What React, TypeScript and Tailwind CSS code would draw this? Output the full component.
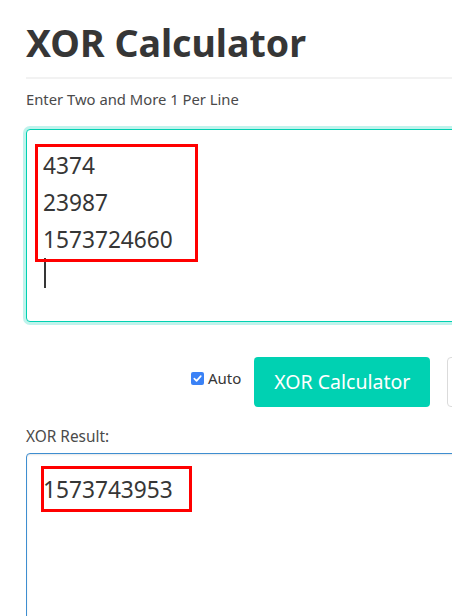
import React from "react";

export default function App() {
  const font = { fontFamily: '"Noto Sans", "Open Sans", sans-serif' };
  return (
    <div className="w-[452px] h-[616px] overflow-hidden bg-white text-[#363636]" style={font}>
      <div className="w-[560px] pl-[26px] pt-[18px]">
        <h1 className="text-[37.5px] font-bold leading-[50px] text-[#363636]">XOR Calculator</h1>
        <div className="mt-[9px] h-[2px] bg-[#f2f2f2]" />
        <div className="mt-[10px] text-[14.8px] leading-[20px] text-[#4a4a4a]">Enter Two and More 1 Per Line</div>
        <div className="mt-[20px] relative h-[193px] w-[520px] rounded-[4px] border border-[#00d1b2] shadow-[0_0_0_3px_rgba(0,209,178,0.25)] bg-white">
          <div className="pl-[16px] pt-[17px] text-[22.7px] leading-[37px] text-[#363636]">
            <div>4374</div>
            <div>23987</div>
            <div>1573724660</div>
          </div>
          <div className="absolute left-[17px] top-[128px] w-[2px] h-[30px] bg-[#363636]" />
          <div className="absolute left-[8px] top-[14px] w-[163px] h-[118px] border-[3px] border-[#ff0000]" />
        </div>
        <div className="mt-[35px] flex items-center h-[50px]">
          <div className="ml-[165px] -mt-[7px] flex items-center">
            <span className="w-[13px] h-[13px] rounded-[2px] bg-[#3b82f6] flex items-center justify-center">
              <svg width="11" height="11" viewBox="0 0 12 12">
                <path d="M2.5 6.2 L5 8.6 L9.6 3.4" stroke="white" strokeWidth="1.8" fill="none" strokeLinecap="round" strokeLinejoin="round" />
              </svg>
            </span>
            <span className="ml-[4px] text-[15px] text-[#363636]">Auto</span>
          </div>
          <div className="ml-[13px] w-[176px] h-[50px] rounded-[4px] bg-[#00d1b2] text-white text-[19.5px] flex items-center justify-center">XOR Calculator</div>
          <div className="ml-[17px] w-[100px] h-[50px] rounded-[4px] border border-[#dbdbdb] bg-white" />
        </div>
        <div className="mt-[20px] text-[15.4px] leading-[20px] text-[#4a4a4a]">XOR Result:</div>
        <div className="mt-[6px] relative h-[200px] w-[520px] rounded-[4px] border border-[#3e8ed0] shadow-[inset_0_1px_2px_rgba(10,10,10,0.1)] bg-white">
          <div className="pl-[16px] pt-[17px] text-[22.7px] leading-[37px] text-[#363636]">1573743953</div>
          <div className="absolute left-[14px] top-[12px] w-[151px] h-[46px] border-[3px] border-[#ff0000]" />
        </div>
      </div>
    </div>
  );
}
